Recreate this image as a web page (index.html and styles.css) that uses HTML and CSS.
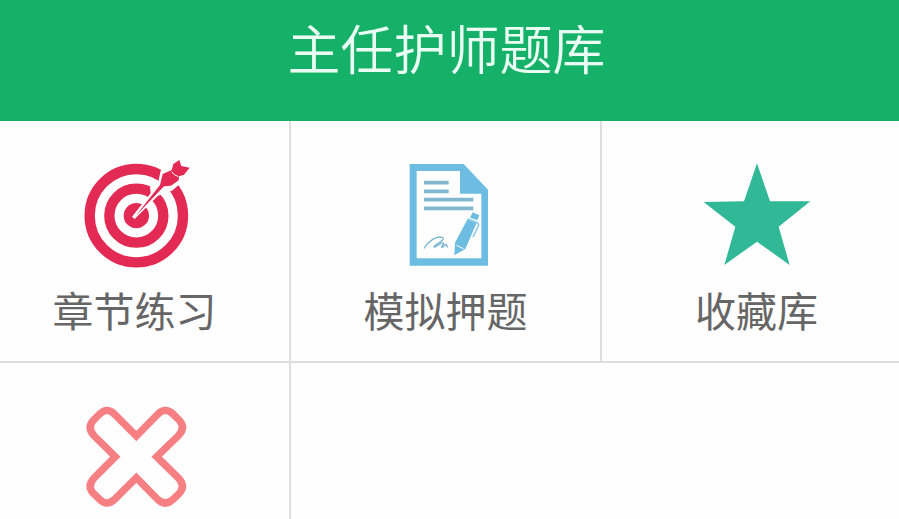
FILE: index.html
```
<!DOCTYPE html>
<html lang="zh-CN">
<head>
    <meta charset="UTF-8">
    <meta name="viewport" content="width=device-width, initial-scale=1.0">
    <title>主任护师题库</title>
    <link rel="stylesheet" href="styles.css">
</head>
<body>
    <header class="header">
        <h1>主任护师题库</h1>
    </header>

    <nav class="menu">
        <!-- Chapter practice -->
        <a class="item" href="#chapter">
            <svg class="icon" viewBox="28 27 330 330" aria-hidden="true">
                <g fill="none" stroke="#e32a55">
                    <circle cx="197" cy="197" r="140" stroke-width="31"/>
                    <circle cx="197" cy="197" r="81" stroke-width="31"/>
                </g>
                <circle cx="197" cy="197" r="38" fill="#e32a55"/>
                <path fill="#fff" d="M184 200L240 130L238 112L262 100L270 62L324 24L364 54L330 100L304 122L262 137L192 207Z"/>
                <path fill="#e32a55" d="M194 199L268 105L276 72L303 60L308 42L326 30L332 48L357 53L340 74L325 79L324 91L301 107L280 109Z"/>
                <path fill="none" stroke="#fff" stroke-width="3" d="M303 65L311 74L323 80"/>
            </svg>
            <span class="label">章节练习</span>
        </a>

        <!-- Mock exam -->
        <a class="item" href="#mock">
            <svg class="icon" viewBox="-15 27 330 330" aria-hidden="true">
                <path fill="#6dbce2" fill-rule="evenodd" d="M41 42H203L276 119V347H41ZM62 63V325H256V131H192V63Z"/>
                <path fill="none" stroke="#82b7cf" stroke-width="11" d="M84 98H158M84 124H158M84 149H232M84 175H232"/>
                <path fill="#6dbce2" d="M230 187L250 196L244 211L222 203Z"/>
                <path fill="#6dbce2" d="M216 205L243 216L208 297L175 316L177 278Z"/>
                <path fill="none" stroke="#fff" stroke-width="3" d="M181 286L203 296"/>
                <path fill="none" stroke="#8dcae8" stroke-width="5" d="M215 208L245 219L248 226L231 261"/>
                <path fill="none" stroke="#78b5d2" stroke-width="4" stroke-linecap="round" d="M85 294C97 273 122 257 138 262C153 270 116 282 114 291C118 296 136 274 142 279C145 283 133 291 138 292C146 290 146 281 151 284L154 291"/>
            </svg>
            <span class="label">模拟押题</span>
        </a>

        <!-- Favourites -->
        <a class="item" href="#favourites">
            <svg class="icon" viewBox="36 27 330 330" aria-hidden="true">
                <path fill="#31b997" d="M201 40L240 154H361L266 230L299 345L201 275L103 345L136 230L41 156L162 154Z"/>
            </svg>
            <span class="label">收藏库</span>
        </a>

        <!-- Wrong answers -->
        <a class="item" href="#wrong" aria-label="错题">
            <svg class="icon" viewBox="28 21 330 330" aria-hidden="true">
                <path fill="none" stroke="#f67f84" stroke-width="22" d="M197 126L259 63Q283 37 307 60L325 78Q347 101 322 126L258 188L322 251Q347 276 325 299L307 316Q283 339 259 314L197 251L134 314Q110 339 87 316L69 299Q47 276 71 251L134 188L71 126Q47 101 69 78L87 60Q110 37 134 63Z"/>
            </svg>
        </a>
    </nav>
</body>
</html>
```
FILE: styles.css
```
body {
    margin: 0;
    height: 100vh;
    overflow: hidden;
    background-color: #fefefe;
    font-family: "Noto Sans CJK SC", sans-serif;
}
.header {
    padding: 11px 0 38px;
    margin: 0 -14px 0 -20px;
    background-color: #15b168;
}
h1 {
    margin: 0;
    color: #e9fff4;
    font-size: 53px;
    font-weight: 350;
    line-height: 72px;
    text-align: center;
}
/* outer columns run past the screen edges */
.menu {
    display: grid;
    grid-template-columns: repeat(3, 1fr);
    margin: 0 -14px 0 -20px;
}
.item {
    display: flex;
    flex-direction: column;
    align-items: center;
    gap: 10px;
    padding: 38px 0 22px;
    border-right: 2px solid #dedede;
    border-bottom: 2px solid #dedede;
    color: #666;
    text-decoration: none;
}
.icon {
    width: 110px;
    height: 110px;
}
.label {
    font-size: 41px;
    line-height: 60px;
}
```
